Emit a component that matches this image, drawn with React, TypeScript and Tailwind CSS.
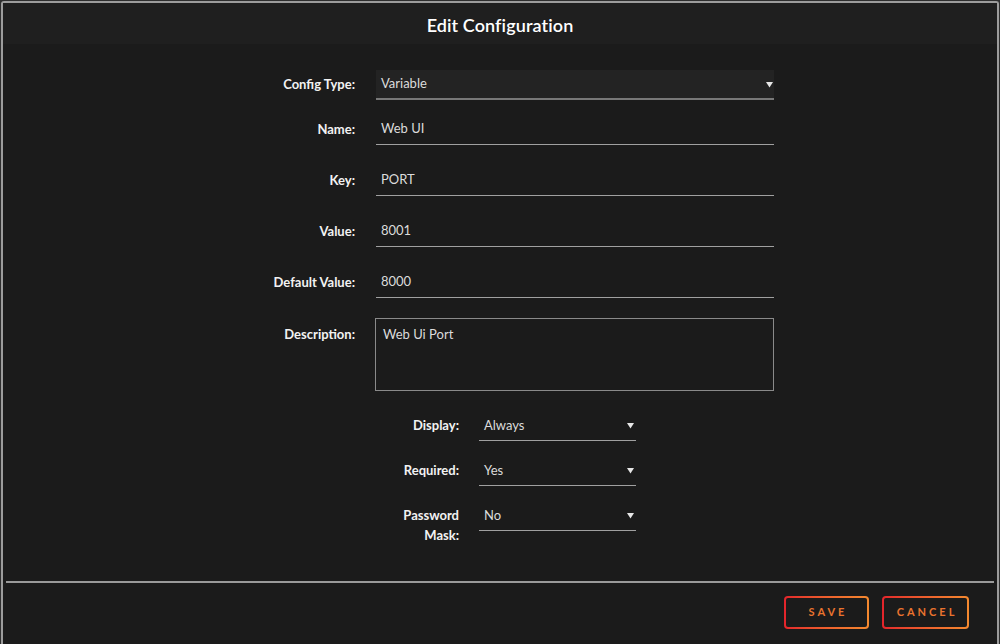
import React from "react";

const Arrow = () => (
  <svg width="7" height="7" viewBox="0 0 7 7" className="shrink-0">
    <path d="M0 1 L7 1 L3.5 6.5 Z" fill="#e6e6e6" />
  </svg>
);

function Row({ label, children, top }: { label: string; children: React.ReactNode; top: string }) {
  return (
    <div className={`flex items-center ${top}`}>
      <div className="w-[120px] pr-0 text-right text-[13px] font-bold text-[#f2f2f2]">{label}</div>
      <div className="ml-[21px] w-[398px]">{children}</div>
    </div>
  );
}

function TextInput({ value }: { value: string }) {
  return (
    <div className="h-[31px] flex items-center border-b border-[#a0a0a0] pl-[5px] text-[13px] text-[#dcdcdc]">
      {value}
    </div>
  );
}

function SmallSelect({ label, value, top, twoLine }: { label: React.ReactNode; value: string; top: string; twoLine?: boolean }) {
  return (
    <div className={`flex ${twoLine ? "items-start" : "items-center"} ${top}`}>
      <div className={`w-[80px] text-right text-[13px] font-bold text-[#f2f2f2] ${twoLine ? "leading-[20px] pt-[4px]" : ""}`}>{label}</div>
      <div className="ml-[20px] w-[157px] h-[30px] flex items-center justify-between border-b border-[#a0a0a0] pl-[5px] pr-[2px] text-[13px] text-[#dcdcdc]">
        <span>{value}</span>
        <Arrow />
      </div>
    </div>
  );
}

export default function App() {
  return (
    <div className="w-[1000px] h-[644px] bg-[#2e2e2e] pl-[1px] pt-[1px] pr-[1px] overflow-hidden" style={{ fontFamily: "Lato, 'Noto Sans', sans-serif" }}>
      <div className="h-[660px] bg-[#1b1b1b] border-2 border-b-0 border-[#9c9c9c] rounded-tl-[3px] rounded-tr-[3px] flex flex-col">
        <div className="h-[41px] bg-[#1f1f1f] flex items-center justify-center pt-[4px]">
          <h1 className="text-[18px] font-semibold text-white tracking-[0.1px]">Edit Configuration</h1>
        </div>
        <div className="flex flex-col pl-[232px]">
          <div className="flex items-center mt-[26px]">
            <div className="w-[120px] text-right text-[13px] font-bold text-[#f2f2f2]">Config Type:</div>
            <div className="ml-[21px] w-[398px] h-[30px] bg-[#232323] border-b-2 border-[#787878] flex items-center justify-between pl-[5px] pr-[1px] text-[13px] text-[#dcdcdc]">
              <span>Variable</span>
              <Arrow />
            </div>
          </div>
          <Row label="Name:" top="mt-[14px]"><TextInput value="Web UI" /></Row>
          <Row label="Key:" top="mt-[20px]"><TextInput value="PORT" /></Row>
          <Row label="Value:" top="mt-[20px]"><TextInput value="8001" /></Row>
          <Row label="Default Value:" top="mt-[20px]"><TextInput value="8000" /></Row>
          <div className="flex items-start mt-[20px]">
            <div className="w-[120px] text-right text-[13px] font-bold text-[#f2f2f2] pt-[7px]">Description:</div>
            <div className="ml-[20px] w-[399px] h-[73px] border border-[#8a8a8a] px-[7px] pt-[6px] text-[13px] text-[#dcdcdc]">
              Web Ui Port
            </div>
          </div>
        </div>
        <div className="flex flex-col pl-[376px]">
          <SmallSelect label="Display:" value="Always" top="mt-[20px]" />
          <SmallSelect label="Required:" value="Yes" top="mt-[15px]" />
          <SmallSelect label={<>Password<br />Mask:</>} value="No" top="mt-[15px]" twoLine />
        </div>
        <div className="mx-[3px] mt-[36px] h-[2px] bg-[#9a9a9a]" />
        <div className="flex justify-end gap-[13px] pr-[28px] mt-[13px]">
          <button className="p-[2px] rounded-[4px] bg-gradient-to-r from-[#e3232b] to-[#f4892f]">
            <span className="flex w-[81px] h-[29px] items-center justify-center rounded-[2px] bg-[#1b1b1b] text-[11px] font-bold tracking-[3px] text-[#e9732e] pl-[3px]">SAVE</span>
          </button>
          <button className="p-[2px] rounded-[4px] bg-gradient-to-r from-[#e3232b] to-[#f4892f]">
            <span className="flex w-[83px] h-[29px] items-center justify-center rounded-[2px] bg-[#1b1b1b] text-[11px] font-bold tracking-[3px] text-[#e9732e] pl-[3px]">CANCEL</span>
          </button>
        </div>
      </div>
    </div>
  );
}
